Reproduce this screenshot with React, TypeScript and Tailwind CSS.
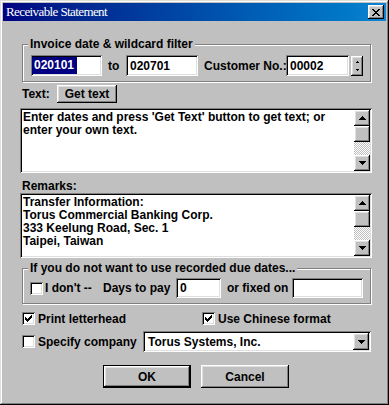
import React from "react";

const sunken =
  "bg-white shadow-[inset_1px_1px_0_#808080,inset_-1px_-1px_0_#fff,inset_2px_2px_0_#000,inset_-2px_-2px_0_#dfdfdf]";
const raised =
  "bg-[#c0c0c0] shadow-[inset_-1px_-1px_0_#000,inset_1px_1px_0_#fff,inset_-2px_-2px_0_#808080,inset_2px_2px_0_#dfdfdf]";
const etched = "border border-[#808080] shadow-[1px_1px_0_#fff,inset_1px_1px_0_#fff]";

function Arrow({ dir }: { dir: "up" | "down" }) {
  return (
    <svg width="7" height="4" viewBox="0 0 7 4" shapeRendering="crispEdges">
      {dir === "up" ? (
        <path d="M3 0h1v1h1v1h1v1h1v1H0V3h1V2h1V1h1z" fill="#000" />
      ) : (
        <path d="M0 0h7v1H6v1H5v1H4v1H3V3H2V2H1V1H0z" fill="#000" />
      )}
    </svg>
  );
}

function Check({ checked }: { checked?: boolean }) {
  return (
    <div className={`w-[13px] h-[13px] shrink-0 flex items-center justify-center ${sunken}`}>
      {checked && (
        <svg width="7" height="7" viewBox="0 0 7 7" shapeRendering="crispEdges">
          <path d="M6 0h1v3H6v1H5v1H4v1H3v1H2V6H1V5H0V2h1v1h1v1h1V3h1V2h1V1h1z" fill="#000" />
        </svg>
      )}
    </div>
  );
}

function ScrollBar() {
  return (
    <div className="w-[16px] h-full flex flex-col shrink-0">
      <div className={`h-[16px] flex items-center justify-center ${raised}`}>
        <Arrow dir="up" />
      </div>
      <div className={`h-[16px] ${raised}`} />
      <div className="flex-1 bg-[image:repeating-conic-gradient(#c0c0c0_0%_25%,#fff_0%_50%)] bg-[length:2px_2px]" />
      <div className={`h-[16px] flex items-center justify-center ${raised}`}>
        <Arrow dir="down" />
      </div>
    </div>
  );
}

function Memo({ lines }: { lines: string[] }) {
  return (
    <div className={`ml-[20px] w-[352px] h-[65px] p-[2px] flex ${sunken}`}>
      <div className="flex-1 pl-[1px] pt-[1px] leading-[13px]">
        {lines.map((l) => (
          <div key={l} className="whitespace-nowrap">
            {l}
          </div>
        ))}
      </div>
      <ScrollBar />
    </div>
  );
}

export default function App() {
  return (
    <div className="w-[389px] h-[405px] bg-[#c0c0c0] flex flex-col font-['Liberation_Sans',Arial,sans-serif] font-bold text-[12px] text-black shadow-[inset_-1px_-1px_0_#000,inset_1px_1px_0_#dfdfdf,inset_-2px_-2px_0_#808080,inset_2px_2px_0_#fff]">
      <div className="px-[3px] pt-[3px]">
        <div className="h-[18px] flex items-center justify-between pl-[3px] pr-[2px] bg-gradient-to-r from-[#000080] to-[#1084d0]">
          <span className="text-white font-normal font-['Liberation_Serif','Times_New_Roman',serif] text-[13px] tracking-[-0.6px]">
            Receivable Statement
          </span>
          <div className={`w-[16px] h-[14px] flex items-center justify-center ${raised}`}>
            <svg width="8" height="7" viewBox="0 0 8 7" shapeRendering="crispEdges">
              <path
                d="M0 0h2v1h1v1h2V1h1V0h2v1H7v1H6v1H5v1h1v1h1v1h1v1H6V6H5V5H3v1H2v1H0V6h1V5h1V4h1V3H2V2H1V1H0z"
                fill="#000"
              />
            </svg>
          </div>
        </div>
      </div>

      {/* invoice filter group */}
      <div className={`relative mt-[23px] ml-[22px] w-[349px] h-[38px] ${etched}`}>
        <span className="absolute left-[5px] -top-[8px] px-[2px] bg-[#c0c0c0] leading-[14px] whitespace-nowrap">
          Invoice date &amp; wildcard filter
        </span>
        <div className="flex items-center pt-[10px] pl-[8px]">
          <div className={`w-[71px] h-[21px] flex items-center pl-[1px] ${sunken}`}>
            <span className="bg-[#000080] text-white leading-[17px] pl-[2px] pr-[3px]">020101</span>
          </div>
          <span className="ml-[6px] w-[18px]">to</span>
          <div className={`w-[72px] h-[21px] flex items-center pl-[4px] ${sunken}`}>020701</div>
          <span className="ml-[6px] w-[82px] whitespace-nowrap">Customer No.:</span>
          <div className={`w-[63px] h-[21px] flex items-center pl-[4px] ${sunken}`}>00002</div>
          <div className={`ml-[2px] w-[12px] h-[20px] flex flex-col items-center justify-between py-[5px] ${raised}`}>
            <svg width="3" height="2" viewBox="0 0 3 2" shapeRendering="crispEdges">
              <path d="M1 0h1v1h1v1H0V1h1z" fill="#000" />
            </svg>
            <svg width="3" height="2" viewBox="0 0 3 2" shapeRendering="crispEdges">
              <path d="M0 0h3v1H2v1H1V1H0z" fill="#000" />
            </svg>
          </div>
        </div>
      </div>

      <div className="mt-[3px] ml-[22px] flex items-center h-[18px]">
        <span className="w-[35px]">Text:</span>
        <div className={`w-[60px] h-[18px] flex items-center justify-center ${raised}`}>Get text</div>
      </div>

      <div className="mt-[5px]">
        <Memo
          lines={[
            "Enter dates and press 'Get Text' button to get text; or",
            "enter your own text.",
          ]}
        />
      </div>

      <div className="mt-[6px] ml-[22px] leading-[14px]">Remarks:</div>

      <Memo
        lines={[
          "Transfer Information:",
          "Torus Commercial Banking Corp.",
          "333 Keelung Road, Sec. 1",
          "Taipei, Taiwan",
        ]}
      />

      {/* due dates group */}
      <div className={`relative mt-[10px] ml-[22px] w-[349px] h-[36px] ${etched}`}>
        <span className="absolute left-[5px] -top-[8px] px-[2px] bg-[#c0c0c0] leading-[14px] whitespace-nowrap">
          If you do not want to use recorded due dates...
        </span>
        <div className="flex items-center pt-[9px] pl-[7px]">
          <Check />
          <span className="ml-[2px] w-[58px] whitespace-nowrap">I don't --</span>
          <span className="w-[73px] whitespace-nowrap">Days to pay</span>
          <div className={`w-[45px] h-[20px] flex items-center pl-[4px] ${sunken}`}>0</div>
          <span className="ml-[6px] w-[65px] whitespace-nowrap">or fixed on</span>
          <div className={`w-[71px] h-[20px] ${sunken}`} />
        </div>
      </div>

      <div className="mt-[8px] ml-[22px] flex items-center h-[13px]">
        <Check checked />
        <span className="ml-[3px] w-[164px] whitespace-nowrap">Print letterhead</span>
        <Check checked />
        <span className="ml-[3px] whitespace-nowrap">Use Chinese format</span>
      </div>

      <div className="mt-[6px] ml-[22px] flex items-center h-[21px]">
        <Check />
        <span className="ml-[3px] w-[105px] whitespace-nowrap">Specify company</span>
        <div className={`w-[228px] h-[21px] flex items-center p-[2px] ${sunken}`}>
          <span className="flex-1 pl-[3px]">Torus Systems, Inc.</span>
          <div className={`w-[16px] h-[17px] flex items-center justify-center ${raised}`}>
            <Arrow dir="down" />
          </div>
        </div>
      </div>

      <div className="mt-[13px] ml-[103px] flex">
        <div className="w-[88px] h-[23px] border border-black">
          <div className={`w-full h-full flex items-center justify-center ${raised}`}>OK</div>
        </div>
        <div className={`ml-[10px] w-[88px] h-[23px] flex items-center justify-center ${raised}`}>Cancel</div>
      </div>
    </div>
  );
}
